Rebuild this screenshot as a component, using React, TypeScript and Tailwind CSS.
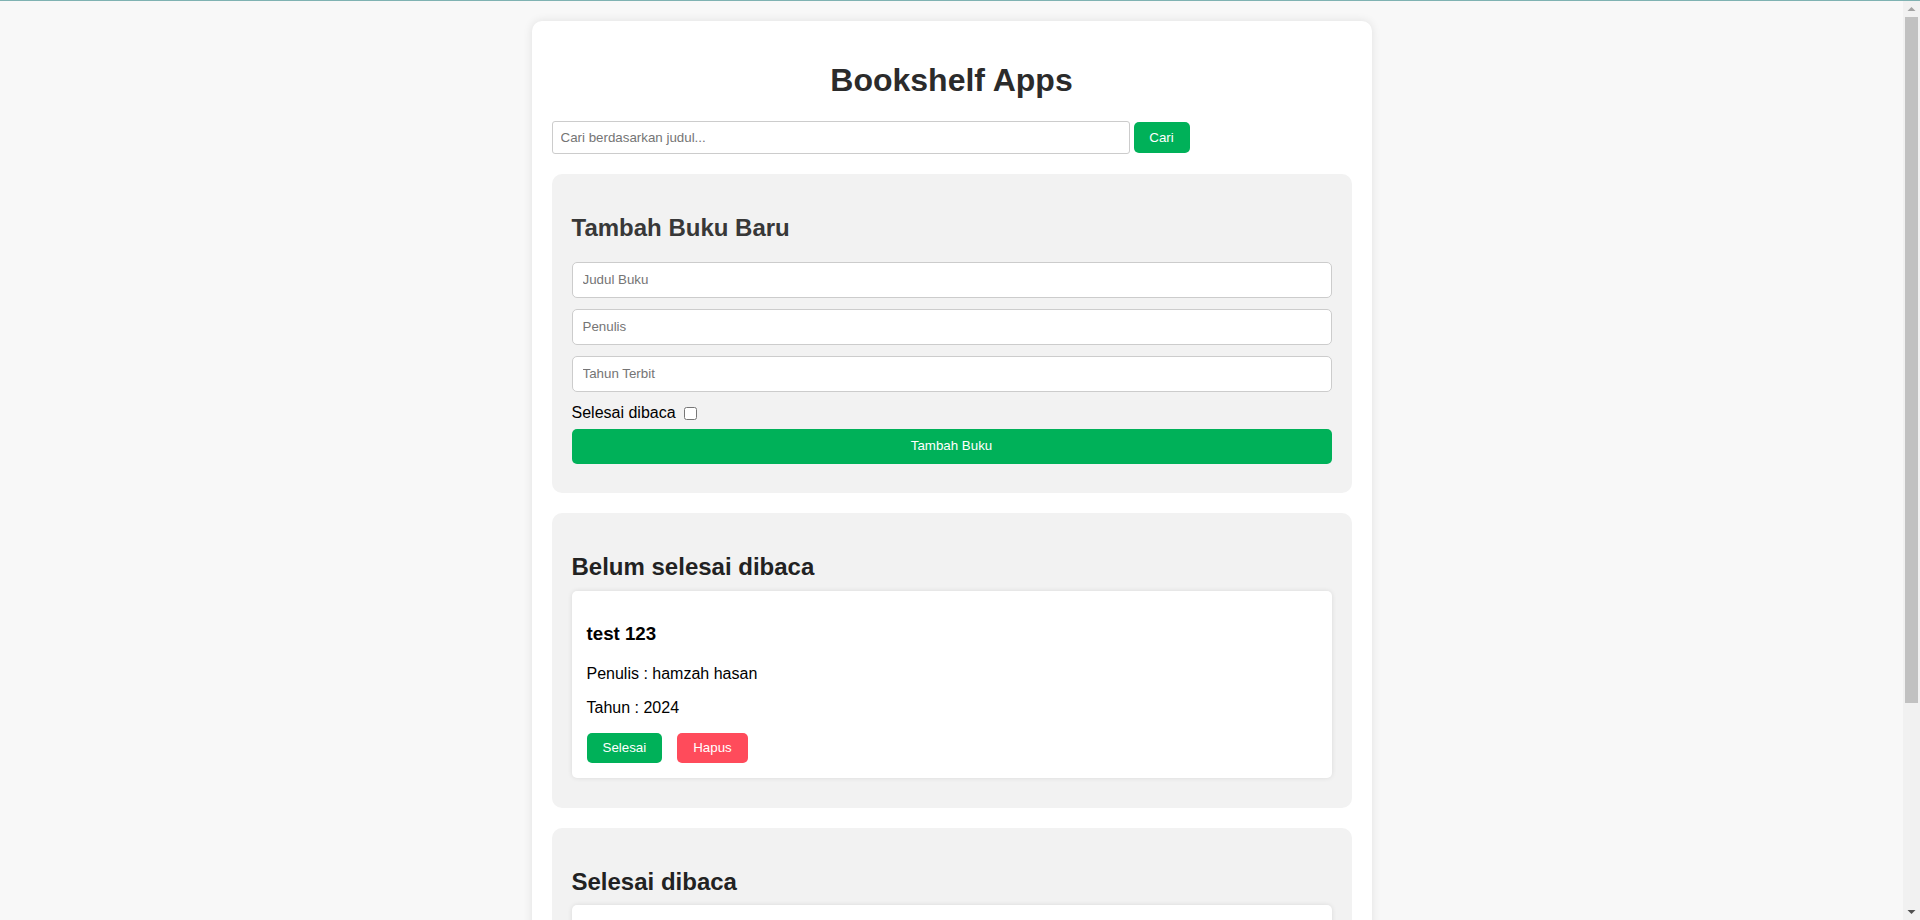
import React from "react";

function BookCard({ title, author, year, doneLabel }: { title: string; author: string; year: string; doneLabel: string }) {
  return (
    <div className="bg-white rounded-[5px] shadow-[0_0_5px_rgba(0,0,0,0.1)] px-[15px] pt-[15px] pb-[15px] mb-[10px]">
      <h3 className="mt-[17px] mb-[20px] text-[18.72px] leading-[21.5px] font-bold text-black">{title}</h3>
      <p className="mb-[16px] text-[16px] leading-[18.4px] text-black">Penulis : {author}</p>
      <p className="mb-[15px] text-[16px] leading-[18.4px] text-black">Tahun : {year}</p>
      <div className="flex items-center gap-[15px]">
        <button className="h-[30px] px-[16px] rounded-[5px] bg-[#00b159] text-white text-[13.33px] font-normal leading-[15px]">
          {doneLabel}
        </button>
        <button className="h-[30px] px-[16px] rounded-[5px] bg-[#ff4b5b] text-white text-[13.33px] font-normal leading-[15px]">
          Hapus
        </button>
      </div>
    </div>
  );
}

function Scrollbar() {
  return (
    <div className="w-[17px] h-full bg-[#f1f1f1] flex flex-col shrink-0">
      <div className="h-[16px] flex items-center justify-center">
        <svg width="9" height="6" viewBox="0 0 9 6">
          <polygon points="0.5,5 4.5,1 8.5,5" fill="#a3a3a3" />
        </svg>
      </div>
      <div className="mx-[2px] h-[686px] bg-[#c1c1c1]" />
      <div className="flex-1" />
      <div className="h-[17px] flex items-center justify-center">
        <svg width="9" height="6" viewBox="0 0 9 6">
          <polygon points="0.5,1 4.5,5 8.5,1" fill="#505050" />
        </svg>
      </div>
    </div>
  );
}

const fieldClass =
  "block w-full h-[36px] border border-[#cccccc] rounded-[5px] bg-white pl-[10px] text-[13.33px] placeholder:text-[#757575] outline-none";

export default function App() {
  return (
    <div
      className="w-full h-[920px] overflow-hidden flex flex-col bg-[#f8f8f8]"
      style={{ fontFamily: '"Liberation Sans", Arial, sans-serif' }}
    >
      <div className="h-px w-full bg-[#7fb2b2] shrink-0" />
      <div className="flex flex-1 min-h-0">
        <main className="flex-1 min-w-0 overflow-hidden">
          <div className="w-[840px] mx-auto mt-[20px] bg-white rounded-[10px] shadow-[0_0_10px_rgba(0,0,0,0.1)] px-[20px] pt-[20px] pb-[20px]">
            <h1 className="mt-[20.5px] text-center text-[32px] leading-[37px] font-bold text-[#2b2b2b]">Bookshelf Apps</h1>

            <form className="mt-[22.5px] flex items-center gap-[4px] h-[33px]" onSubmit={(e) => e.preventDefault()}>
              <input
                type="text"
                placeholder="Cari berdasarkan judul..."
                className="w-[578px] h-[33px] border border-[#cccccc] rounded-[3px] bg-white pl-[8px] text-[13.33px] placeholder:text-[#757575] outline-none"
              />
              <button className="w-[56px] h-[31px] rounded-[5px] bg-[#00b159] text-white text-[13.33px] font-normal">
                Cari
              </button>
            </form>

            <section className="mt-[20px] bg-[#f2f2f2] rounded-[10px] px-[20px] pt-[20px] pb-[29px]">
              <h2 className="mt-[20px] mb-[20px] text-[24px] leading-[27.6px] font-bold text-[#383838]">Tambah Buku Baru</h2>
              <form onSubmit={(e) => e.preventDefault()}>
                <input type="text" placeholder="Judul Buku" className={`${fieldClass} mb-[11px]`} />
                <input type="text" placeholder="Penulis" className={`${fieldClass} mb-[11px]`} />
                <input type="text" placeholder="Tahun Terbit" className={`${fieldClass} mb-[13px]`} />
                <label className="flex items-center h-[18px] text-[16px] leading-[18.4px] text-black">
                  Selesai dibaca
                  <input type="checkbox" className="ml-[8px] w-[13px] h-[13px] m-0" />
                </label>
                <button className="mt-[6px] w-full h-[35px] rounded-[5px] bg-[#00b159] text-white text-[13.33px] font-normal">
                  Tambah Buku
                </button>
              </form>
            </section>

            <section className="mt-[20px] bg-[#f2f2f2] rounded-[10px] px-[20px] pt-[20px] pb-[20px]">
              <h2 className="mt-[20px] mb-[11px] text-[24px] leading-[27.6px] font-bold text-[#222]">Belum selesai dibaca</h2>
              <BookCard title="test 123" author="hamzah hasan" year="2024" doneLabel="Selesai" />
            </section>

            <section className="mt-[20px] bg-[#f2f2f2] rounded-[10px] px-[20px] pt-[20px] pb-[20px]">
              <h2 className="mt-[20px] mb-[10px] text-[24px] leading-[27.6px] font-bold text-[#222]">Selesai dibaca</h2>
              <div className="bg-white rounded-[5px] shadow-[0_0_5px_rgba(0,0,0,0.1)] h-[187px] mb-[10px]" />
            </section>
          </div>
        </main>
        <Scrollbar />
      </div>
    </div>
  );
}
